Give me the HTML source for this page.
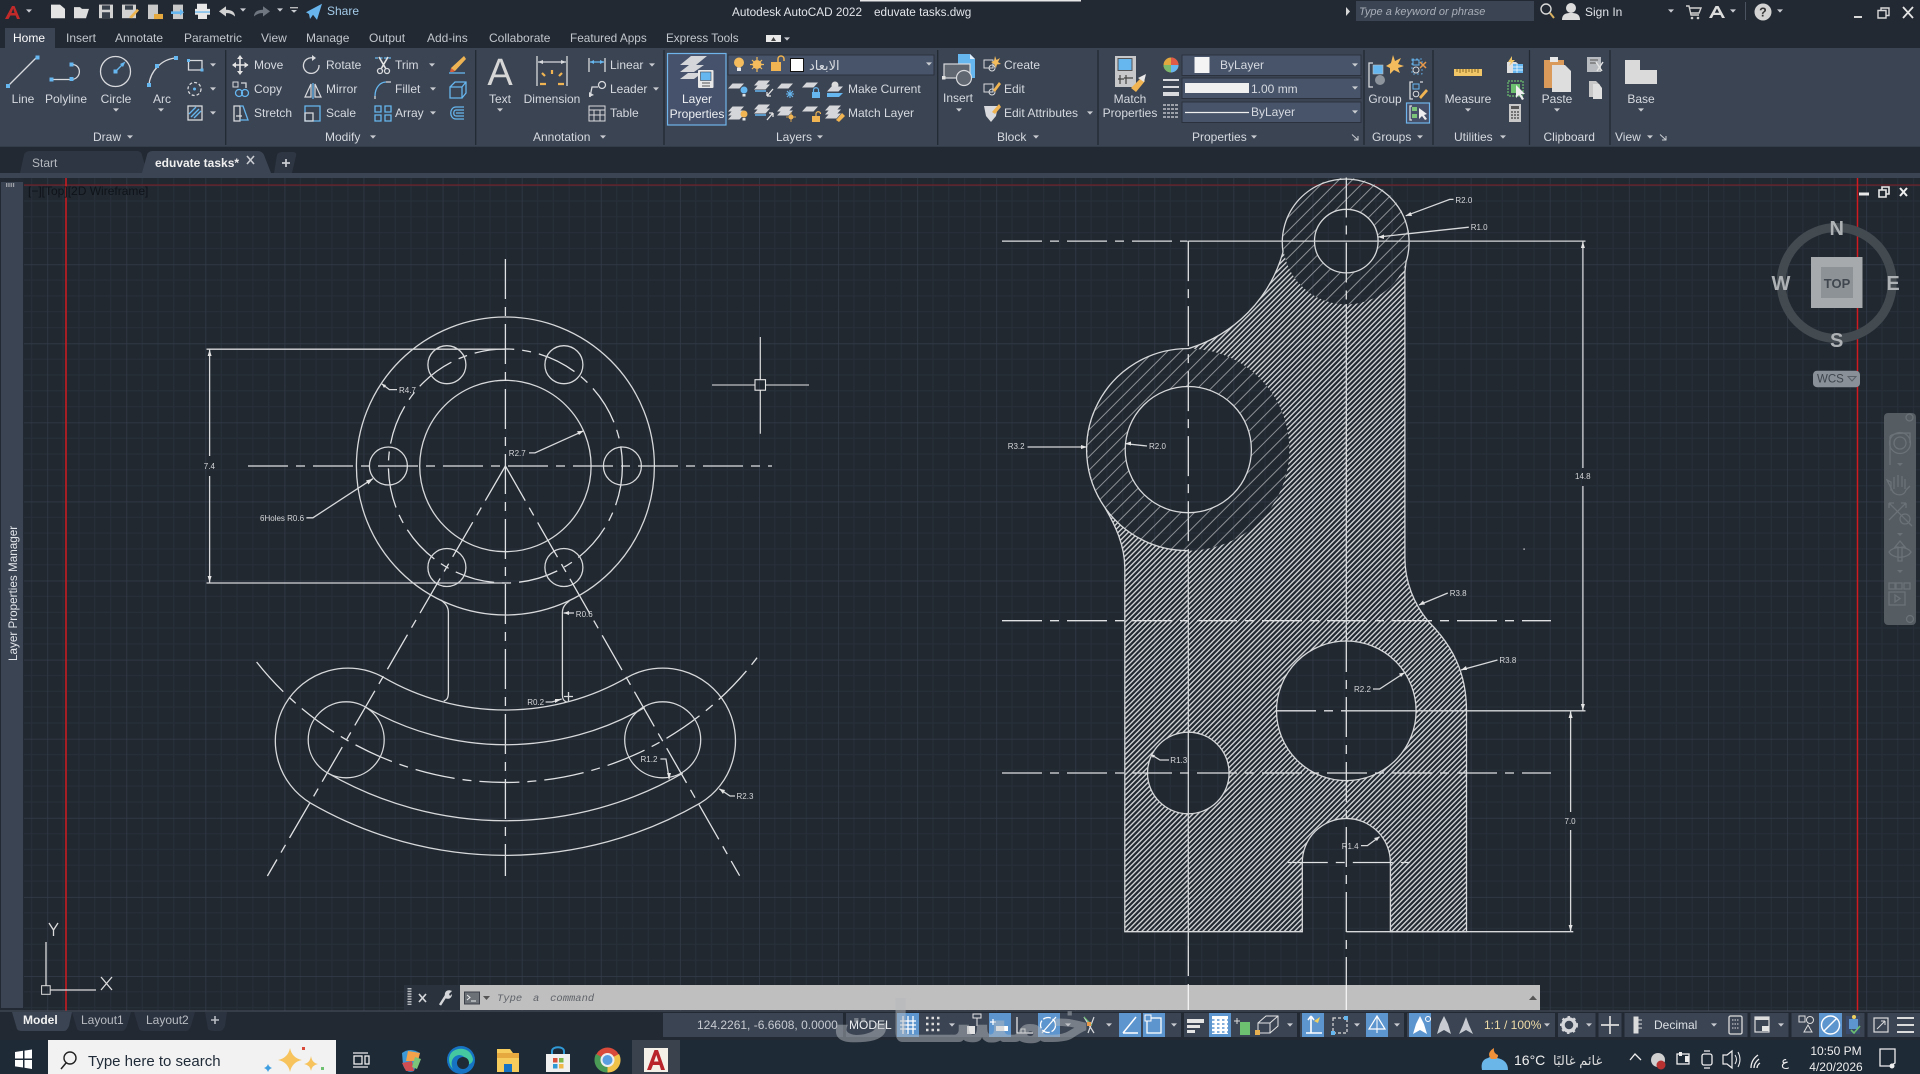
<!DOCTYPE html>
<html lang="en"><head><meta charset="utf-8"><title>Autodesk AutoCAD 2022 - eduvate tasks.dwg</title>
<style>
html,body{margin:0;padding:0;background:#222933;width:1920px;height:1074px;overflow:hidden}
svg{display:block}
text{font-family:"Liberation Sans","DejaVu Sans",sans-serif;font-size:12px;fill:#e2e5ea}
.t{fill:#c3c7cd}
.d text,text.d{font-size:8px;fill:#d4d6d8}
.p{font-size:12px;fill:#d6dae0}
.l{fill:none;stroke:#d6d8da;stroke-width:1.3}
.cl{fill:none;stroke:#dfe1e3;stroke-width:1.3;stroke-dasharray:40 8 9 8}
.g{fill:none;stroke:#d8dadd;stroke-width:1.3}
.b{fill:none;stroke:#66b6ef;stroke-width:1.3}
</style></head><body>
<svg width="1920" height="1074" viewBox="0 0 1920 1074" xmlns="http://www.w3.org/2000/svg">
<defs>
<pattern id="grid" patternUnits="userSpaceOnUse" x="47.3" y="264.3" width="79.08" height="79.08">
<path d="M15.8 0V79.08M31.6 0V79.08M47.4 0V79.08M63.3 0V79.08M0 15.8H79.08M0 31.6H79.08M0 47.4H79.08M0 63.3H79.08" stroke="#282f3a" stroke-width="1"/>
<path d="M0 0V79.08M0 0H79.08" stroke="#343c4b" stroke-width="1.4" fill="none"/>
</pattern>
<pattern id="dense" patternUnits="userSpaceOnUse" width="3.6" height="3.6" patternTransform="rotate(45)"><rect width="1.4" height="3.6" fill="#cfd1d3"/></pattern>
<pattern id="sparse" patternUnits="userSpaceOnUse" width="9.5" height="9.5" patternTransform="rotate(45)"><rect width="1" height="9.5" fill="#8d9196"/></pattern>
<mask id="mDense" maskUnits="userSpaceOnUse" x="1000" y="170" width="600" height="800">
<path fill="#fff" d="M1124.8 931.7V568C1124.8 545 1115 525 1105.2 508A101 101 0 0 1 1188.3 348.6A140 140 0 0 0 1283 252A63.4 63.4 0 1 1 1406 262L1404.9 272V558C1404.9 582 1414 604 1428 621C1452 645 1466.5 672 1466.5 710.8V931.7H1390.4V862.5A44 44 0 0 0 1302.3 862.5V931.7Z"/>
<circle cx="1346.3" cy="241.1" r="63.4" fill="#000"/><circle cx="1188.3" cy="449.6" r="101" fill="#000"/>
<circle cx="1346.3" cy="710.8" r="69.8" fill="#000"/><circle cx="1188.3" cy="773" r="40.8" fill="#000"/>
</mask>
<clipPath id="ringT"><path clip-rule="evenodd" d="M1282.9 241.1a63.4 63.4 0 1 0 126.8 0a63.4 63.4 0 1 0 -126.8 0ZM1314.5 241.1a31.8 31.8 0 1 0 63.6 0a31.8 31.8 0 1 0 -63.6 0Z"/></clipPath>
<clipPath id="ringL"><path clip-rule="evenodd" d="M1087.3 449.6a101 101 0 1 0 202 0a101 101 0 1 0 -202 0ZM1125.2 449.6a63.1 63.1 0 1 0 126.2 0a63.1 63.1 0 1 0 -126.2 0Z"/></clipPath>
<path id="c" d="M-3-1.6H3L0 1.6Z" fill="#c9ccd1"/>
<path id="lay" d="M-8 2.5L-3.5-2.5H8L3.5 2.5Z" fill="#d4d6d9"/>
</defs>

<!-- chrome -->
<rect width="1920" height="1074" fill="#222933"/>
<rect x="860" y="0" width="221" height="1.5" fill="#e8e8e8"/>
<path d="M5 28H55V48H5Z" fill="#3b4453"/>
<rect y="48" width="1920" height="98.7" fill="#3b4453"/>
<path d="M225.7 50V145M475.7 50V145M664 50V145M937.7 50V145M1098 50V145M1364 50V145M1433 50V145M1529.5 50V145M1610 50V145" stroke="#222933" stroke-width="1.3"/>

<!-- quick access bar -->
<path d="M5 19L12 6H14.500L20 19H17L15.600 15.500H10.400L8.500 19ZM11.500 13H14.500L13.200 8.500Z" fill="#c22a2a"/>
<use href="#c" x="29" y="11"/>
<g transform="translate(0,1.2) scale(1,.85)">
<path d="M51 4H60L65 9V20H51Z" fill="#e4e4e4"/>
<path d="M74 20V7H80L82 9H89L86 20Z" fill="#dedede"/>
<path d="M99 4H113V20H99Z" fill="#d2d2d2"/><rect x="102" y="5" width="8" height="5" fill="#39414d"/><rect x="102" y="13" width="8" height="7" fill="#39414d"/>
<path d="M122 4H136V20H122Z" fill="#d2d2d2"/><rect x="125" y="5" width="8" height="5" fill="#39414d"/><path d="M129 19L137 9L139 11L132 20Z" fill="#edb452"/>
<rect x="148" y="4" width="10" height="17" fill="#c9c9c9"/><path d="M154 15H163V21H154Z" fill="#e6a93f"/>
<rect x="173" y="4" width="10" height="17" fill="#c9c9c9"/><path d="M171 12H180V9L184 13L180 17V15H171Z" fill="#66b6ef"/>
<path d="M197 3H207V9H197Z M195 9H210V16H195Z M198 14H207V21H198Z" fill="#e8e8e8"/><rect x="195" y="12" width="15" height="1.5" fill="#66b6ef"/>
<path d="M219 12L226 6V10C232 10 235 13 235 18C232 15 230 14 226 14V18Z" fill="#d2d2d2"/>
<path d="M270 12L263 6V10C257 10 254 13 254 18C257 15 259 14 263 14V18Z" fill="#6f7680"/>
<path d="M290 7H298V8.4H290Z" fill="#d2d2d2"/><use href="#c" x="294" y="12"/>
<path d="M306 13L322 3L317 22L313 16L310 21L309 15Z" fill="#68b5ee"/>
</g>
<use href="#c" x="243" y="10"/><use href="#c" x="280" y="10"/>
<text x="327" y="15" style="fill:#a4cbe9">Share</text>

<!-- title -->
<text x="732" y="16" style="font-size:11.75px">Autodesk AutoCAD 2022</text>
<text x="874" y="16" style="font-size:11.75px">eduvate tasks.dwg</text>

<!-- right of title -->
<path d="M1346 7L1350 11.5L1346 16Z" fill="#d8d8d8"/>
<rect x="1356" y="1" width="178" height="20" fill="#3b4453"/>
<text x="1359" y="15" style="font-size:11px;font-style:italic;fill:#a9afb9">Type a keyword or phrase</text>
<circle cx="1546" cy="9" r="5" fill="none" stroke="#d8d8d8" stroke-width="1.4"/><path d="M1550 13L1554 18" stroke="#d8b060" stroke-width="2"/>
<circle cx="1571" cy="8" r="5" fill="#dcdcdc"/><path d="M1562 20C1562 14 1566 13 1571 13S1580 14 1580 20Z" fill="#dcdcdc"/>
<text x="1585" y="16">Sign In</text>
<use href="#c" x="1671" y="11"/>
<path d="M1686 6H1689L1691 15H1699M1690 8H1701L1699 13H1691" fill="none" stroke="#cfcfcf" stroke-width="1.400"/><circle cx="1692" cy="18" r="1.300" fill="#cfcfcf"/><circle cx="1698" cy="18" r="1.300" fill="#cfcfcf"/>
<path d="M1709 18L1715.500 6H1718.500L1725 18H1722L1720.500 15H1713.500L1712 18ZM1714.800 12.800H1719.200L1717 8.500Z" fill="#dcdcdc"/>
<use href="#c" x="1733" y="11"/>
<rect x="1745" y="2" width="1" height="18" fill="#4b5361"/>
<circle cx="1763" cy="12" r="8.500" fill="#d2d2d2"/><text x="1763" y="16.500" text-anchor="middle" style="font-size:12.500px;font-weight:bold;fill:#333">?</text>
<use href="#c" x="1780" y="11"/>
<rect x="1854" y="16" width="8" height="2" fill="#d8d8d8"/>
<path d="M1878 10.500H1886V18H1878ZM1881 10.500V8H1889V15.500H1886" fill="none" stroke="#d8d8d8" stroke-width="1.400"/>
<path d="M1903 7L1913 18M1913 7L1903 18" stroke="#e4e4e4" stroke-width="1.800"/>

<!-- tabs -->
<text x="13" y="42" style="fill:#fff">Home</text><text x="66" y="42" class="t">Insert</text><text x="115" y="42" class="t">Annotate</text><text x="184" y="42" class="t">Parametric</text><text x="261" y="42" class="t">View</text><text x="306" y="42" class="t">Manage</text><text x="369" y="42" class="t">Output</text><text x="427" y="42" class="t">Add-ins</text><text x="489" y="42" class="t">Collaborate</text><text x="570" y="42" class="t" style="font-size:11.800px">Featured Apps</text><text x="666" y="42" class="t" style="font-size:11.700px">Express Tools</text>
<rect x="766" y="35" width="15" height="7" fill="#e8e8e8"/><path d="M771 41L773.500 37L776 41Z" fill="#444"/><use href="#c" x="787" y="39"/>

<!-- DRAW -->
<path d="M8 86L37 57" class="g"/><rect x="6" y="84" width="4" height="4" fill="#66b6ef"/><rect x="35.500" y="55.500" width="4" height="4" fill="#66b6ef"/>
<path d="M52 79.500H71.500C82 79 82 64 71.500 64.500" class="g"/><rect x="49.500" y="77.500" width="4" height="4" fill="#66b6ef"/><rect x="69.500" y="77" width="4" height="4" fill="#66b6ef"/><rect x="69.500" y="62.500" width="4" height="4" fill="#66b6ef"/>
<circle cx="115.500" cy="71.500" r="15" class="g"/><path d="M115.500 71.500L124 63" class="b"/><path d="M125.500 61.500L123 67L120 64Z" fill="#66b6ef"/><rect x="113.500" y="69.500" width="4" height="4" fill="#66b6ef"/>
<path d="M149 85C150 72 161 59 176 58" class="g"/><rect x="147" y="83" width="4" height="4" fill="#66b6ef"/><rect x="155" y="64" width="4" height="4" fill="#66b6ef"/><rect x="174" y="56" width="4" height="4" fill="#66b6ef"/>
<text x="23" y="103" text-anchor="middle" class="p">Line</text><text x="66" y="103" text-anchor="middle" class="p">Polyline</text><text x="116" y="103" text-anchor="middle" class="p">Circle</text><text x="162" y="103" text-anchor="middle" class="p">Arc</text>
<use href="#c" x="116" y="110"/><use href="#c" x="161" y="110"/>
<path d="M188.500 60.500H202V70H188.500Z" class="g"/><rect x="187" y="59" width="3" height="3" fill="#66b6ef"/><rect x="200.500" y="68.500" width="3" height="3" fill="#66b6ef"/>
<circle cx="194.500" cy="89" r="6.500" class="g" stroke-dasharray="3 2"/><circle cx="194.500" cy="89" r="1.500" fill="#66b6ef"/>
<rect x="188" y="106" width="14" height="14" fill="none" stroke="#d8dadd" stroke-width="1.300"/><path d="M191 117L199 109M194 118L201 111M189 114L196 107" stroke="#66b6ef" stroke-width="1.400"/>
<use href="#c" x="213" y="65"/><use href="#c" x="213" y="89"/><use href="#c" x="213" y="113"/>
<text x="93" y="141" class="p">Draw</text><use href="#c" x="130" y="137"/>

<!-- MODIFY -->
<path d="M240 57V73M233 65H248" stroke="#e4e4e4" stroke-width="1.600"/><path d="M240 55L243 59H237ZM240 75L243 71H237ZM232 65L236 62V68ZM248.500 65L244.500 62V68Z" fill="#e4e4e4"/>
<rect x="233" y="82" width="5" height="5" fill="none" stroke="#d8dadd"/><path d="M241 83H246V88" class="g"/><circle cx="239" cy="93" r="3.500" class="b"/><circle cx="245" cy="93" r="3.500" class="b"/>
<path d="M234 106H240V121H234Z" class="g"/><path d="M240 106H243L248 120H240" class="b"/><path d="M236 116H242" class="g"/>
<text x="254" y="69" class="p">Move</text><text x="254" y="93" class="p">Copy</text><text x="254" y="117" class="p">Stretch</text>
<path d="M313 58A7.800 7.800 0 1 0 319 65" class="g" stroke-width="1.600"/><path d="M312 55L316 58L312 61Z" fill="#d8dadd"/>
<path d="M311 97H305L311 84ZM315 97V84L321 97Z" fill="none" stroke="#d8dadd" stroke-width="1.200"/><path d="M313 83V99" class="b"/>
<path d="M305 106H320V121H305Z" class="b"/><path d="M305 113H313V121H305Z" class="g"/>
<text x="326" y="69" class="p">Rotate</text><text x="326" y="93" class="p">Mirror</text><text x="326" y="117" class="p">Scale</text>
<path d="M375 58H391" stroke="#66b6ef" stroke-width="1.300" stroke-dasharray="3 1.500"/><path d="M379 57L386 69M388 57L381 69" stroke="#e4e4e4" stroke-width="1.600"/><circle cx="380" cy="71" r="2.500" class="g"/><circle cx="387" cy="71" r="2.500" class="g"/>
<path d="M375 96C375 88 380 82 386 82" class="b"/><path d="M386 82H391M375 96V99" class="g"/>
<path d="M375 106H381V112H375ZM385 106H391V112H385ZM375 115H381V121H375ZM385 115H391V121H385Z" class="b"/>
<text x="395" y="69" class="p">Trim</text><text x="395" y="93" class="p">Fillet</text><text x="395" y="117" class="p">Array</text>
<use href="#c" x="432" y="65"/><use href="#c" x="433" y="89"/><use href="#c" x="433" y="113"/>
<path d="M451 68L464 56L466 59L455 71H451Z" fill="#eeb454"/><path d="M451 68L455 71L453 72H450Z" fill="#d85e3a"/><path d="M449 73H465" class="b"/>
<path d="M450 87H462V98H450ZM450 87L455 82H466V93L462 98M462 87L466 82" class="b"/>
<path d="M464 107H456C449 107 449 119 456 119H464M464 110H456C453 110 453 116 456 116H464M456 113H464" class="b"/>
<text x="325" y="141" class="p">Modify</text><use href="#c" x="373" y="137"/>

<!-- ANNOTATION -->
<text x="500" y="85" text-anchor="middle" style="font-size:38px;fill:#d6d6d6">A</text>
<text x="500" y="103" text-anchor="middle" class="p">Text</text><use href="#c" x="500" y="110"/>
<path d="M537 56V86M567 56V86" class="g"/><path d="M538 62H566" class="g"/><path d="M538 62L543 60V64ZM566 62L561 60V64Z" fill="#d8dadd"/>
<path d="M552 74V70M545 76L542 73M559 76L562 73M540 84H546M558 84H564" stroke="#f0b452" stroke-width="2.200"/>
<text x="552" y="103" text-anchor="middle" class="p">Dimension</text>
<path d="M589 58V72M605 58V72" class="g"/><path d="M590 62H604" class="b"/><path d="M590 62L594 60V64ZM604 62L600 60V64Z" fill="#66b6ef"/>
<circle cx="602" cy="85" r="3.500" class="g"/><path d="M598 87L592 87L590 97" class="g"/><path d="M589 97L594 95L589 92Z" fill="#d8dadd"/>
<path d="M589 106H605V121H589ZM589 110H605M589 115H605M594 110V121M600 110V121" fill="none" stroke="#d8dadd" stroke-width="1"/>
<text x="610" y="69" class="p">Linear</text><text x="610" y="93" class="p">Leader</text><text x="610" y="117" class="p">Table</text>
<use href="#c" x="652" y="65"/><use href="#c" x="656" y="89"/>
<text x="533" y="141" class="p">Annotation</text><use href="#c" x="603" y="137"/>

<!-- LAYERS -->
<rect x="667.500" y="53.500" width="58.500" height="71.500" fill="#46526b" stroke="#6fb4ea" stroke-width="1.200"/>
<path d="M680 65L691 56H707L696 65Z" fill="#d4d6d9"/><path d="M680 72L689 65H704L694 72Z" fill="#d4d6d9"/><path d="M680 79L688 73H702L694 79Z" fill="#d4d6d9"/>
<rect x="698" y="70" width="15.500" height="18" rx="1" fill="#e8e8e8"/><rect x="700.500" y="72" width="10.500" height="8.500" fill="#66b6ef" stroke="#3c4450" stroke-width=".6"/><path d="M702 83H710M702 86H710" stroke="#555" stroke-width="1"/>
<text x="697" y="103" text-anchor="middle" class="p" style="fill:#eef0f3">Layer</text><text x="697" y="118" text-anchor="middle" class="p" style="fill:#eef0f3">Properties</text>
<rect x="728" y="55" width="206" height="20" fill="#47546a" stroke="#2b323d"/>
<circle cx="739" cy="62.500" r="5" fill="#f4bc5c"/><rect x="737" y="67.500" width="4" height="3.500" fill="#e8e8e8"/>
<circle cx="757" cy="64.500" r="4.500" fill="#f4bc5c"/><path d="M757 57V60M757 69V72M750 64.500H753M761 64.500H764M752 60L754 62M762 60L760 62M752 69L754 67M762 69L760 67" stroke="#f4bc5c" stroke-width="1.200"/>
<path d="M771 71V62H781V71Z" fill="#f0b452"/><path d="M778 62V59C778 55 784 55 784 59V61" fill="none" stroke="#f0b452" stroke-width="1.500"/>
<rect x="790.500" y="58.500" width="13" height="13" fill="#fff" stroke="#111" stroke-width="1"/>
<text x="809" y="70" direction="ltr" style="font-size:13px;fill:#d8dbe0">الابعاد</text>
<use href="#c" x="929" y="64"/>
<!-- layer small icons row 1 -->
<use href="#lay" x="736" y="86"/><circle cx="744" cy="90" r="3.500" fill="#66b6ef"/><rect x="742.500" y="94" width="3" height="2.500" fill="#e4e4e4"/>
<use href="#lay" x="762" y="83"/><use href="#lay" x="762" y="87"/><path d="M755 91H766" stroke="#66b6ef" stroke-width="1.500"/><path d="M773 89L767 96M767 96H771M767 96V92" stroke="#e4e4e4" stroke-width="1.300" fill="none"/>
<use href="#lay" x="785" y="86"/><path d="M790 90V98M786 94H794M787 91L793 97M793 91L787 97" stroke="#66b6ef" stroke-width="1.100"/>
<use href="#lay" x="810" y="85"/><rect x="812" y="92" width="8" height="6" fill="#66b6ef"/><path d="M813.500 92V90C813.500 87 818.500 87 818.500 90V92" fill="none" stroke="#66b6ef" stroke-width="1.200"/>
<circle cx="835" cy="85" r="3.500" fill="#dcdcdc"/><use href="#lay" x="835" y="89"/><path d="M827 93H843L839 97H827Z" fill="#66b6ef"/>
<text x="848" y="93" class="p">Make Current</text>
<!-- row 2 -->
<use href="#lay" x="736" y="109"/><use href="#lay" x="736" y="113"/><use href="#lay" x="736" y="117"/><circle cx="744" cy="114" r="3.500" fill="#f0b452"/><rect x="742.500" y="118" width="3" height="2.500" fill="#e4e4e4"/>
<use href="#lay" x="762" y="107"/><use href="#lay" x="762" y="111"/><path d="M755 115H766" stroke="#66b6ef" stroke-width="1.500"/><path d="M767 120L773 113M773 113H769M773 113V117" stroke="#e4e4e4" stroke-width="1.300" fill="none"/>
<use href="#lay" x="785" y="109"/><use href="#lay" x="785" y="113"/><circle cx="791" cy="117" r="2.500" fill="#f0b452"/><path d="M791 112V122M786 117H796" stroke="#f0b452" stroke-width=".8"/>
<use href="#lay" x="810" y="109"/><rect x="812" y="116" width="8" height="6" fill="#f0b452"/><path d="M816 116V114C816 111 820.500 111 820.500 114" fill="none" stroke="#f0b452" stroke-width="1.200"/>
<use href="#lay" x="833" y="108"/><use href="#lay" x="833" y="112"/><use href="#lay" x="833" y="116"/><path d="M836 120L842 113L845 116L839 122Z" fill="#f0b452"/>
<text x="848" y="117" class="p">Match Layer</text>
<text x="776" y="141" class="p">Layers</text><use href="#c" x="820" y="137"/>

<!-- BLOCK -->
<path d="M958 54H970L975 59V78H958Z" fill="#66b6ef"/><path d="M970 54L975 59H970Z" fill="#dfeefa"/>
<rect x="944" y="64" width="26" height="14" fill="#606770" stroke="#d8dadd" stroke-width="1.200"/><circle cx="964" cy="78" r="7.500" fill="#606770" stroke="#d8dadd" stroke-width="1.200"/>
<rect x="942" y="76" width="3.500" height="3.500" fill="#e0e0e0"/>
<text x="958" y="102" text-anchor="middle" class="p">Insert</text><use href="#c" x="959" y="110"/>
<rect x="984" y="60" width="9" height="8" fill="none" stroke="#d8dadd"/><circle cx="992" cy="68" r="3" fill="none" stroke="#d8dadd"/><path d="M995 56L996.500 60L1000 58L998 62L1001 64L997 64.500L996 68L994 64L991 62L994 61Z" fill="#f4bc5c"/>
<rect x="984" y="84" width="9" height="8" fill="none" stroke="#d8dadd"/><circle cx="992" cy="92" r="3" fill="none" stroke="#d8dadd"/><path d="M993 90L999 82L1001 84L995 92Z" fill="#f0b452"/>
<path d="M984 106H998L996 116L991 122L986 116Z" fill="#d8dadd"/><path d="M992 112L999 104L1001 107L995 114Z" fill="#f0b452"/>
<text x="1004" y="69" class="p">Create</text><text x="1004" y="93" class="p">Edit</text><text x="1004" y="117" class="p">Edit Attributes</text>
<use href="#c" x="1090" y="113"/>
<text x="997" y="141" class="p">Block</text><use href="#c" x="1036" y="137"/>

<!-- PROPERTIES -->
<rect x="1115" y="56" width="21" height="31" fill="#c6c8ca"/><rect x="1118" y="58.500" width="14" height="12" fill="#66b6ef" stroke="#555"/><path d="M1120 75V84M1126 75V84M1118 79H1124M1124 78H1133" stroke="#444" stroke-width="1.200"/>
<path d="M1131 88L1141 78L1145 81L1136 92Z" fill="#f0b452"/><path d="M1138 78L1146 74L1144 82Z" fill="#e8e8e8"/>
<text x="1130" y="103" text-anchor="middle" class="p">Match</text><text x="1130" y="117" text-anchor="middle" class="p">Properties</text>
<circle cx="1171" cy="65" r="7.500" fill="#e2a840"/><path d="M1171 65V57.500A7.500 7.500 0 0 1 1178.500 65Z" fill="#e05a48"/><path d="M1171 65H1178.500A7.500 7.500 0 0 1 1171 72.500Z" fill="#66b6ef"/><path d="M1171 65V72.500A7.500 7.500 0 0 1 1163.500 65Z" fill="#7ab86c"/>
<path d="M1163 80H1179M1163 87H1179" stroke="#d8dadd" stroke-width="2"/><rect x="1163" y="92" width="16" height="4" fill="#d8dadd"/>
<path d="M1163 105H1179M1163 109H1179M1163 113H1179M1163 117H1179" stroke="#d8dadd" stroke-width="1.300" stroke-dasharray="3 1"/>
<rect x="1182" y="55" width="179" height="20.500" fill="#47546a" stroke="#2b323d"/><rect x="1182" y="78" width="179" height="20.500" fill="#47546a" stroke="#2b323d"/><rect x="1182" y="102" width="179" height="20.500" fill="#47546a" stroke="#2b323d"/>
<rect x="1194.500" y="57" width="15" height="16" fill="#f4f4f4"/>
<text x="1220" y="69" class="p">ByLayer</text>
<rect x="1185" y="83" width="64" height="10" fill="#f0f0f0"/><text x="1251" y="93" class="p">1.00 mm</text>
<path d="M1185 112.500H1249" stroke="#f0f0f0" stroke-width="1.300"/><text x="1251" y="116" class="p">ByLayer</text>
<use href="#c" x="1355" y="65"/><use href="#c" x="1355" y="88"/><use href="#c" x="1355" y="112"/>
<text x="1192" y="141" class="p">Properties</text><use href="#c" x="1254" y="137"/>
<path d="M1352 134.500L1358 140M1358 136V140H1354" stroke="#c9ccd1" fill="none"/>

<!-- GROUPS -->
<path d="M1373 63H1369V87H1373M1391 63H1395" class="g"/><rect x="1373" y="65" width="10" height="9" fill="#66b6ef" stroke="#bbb" stroke-width=".6"/><circle cx="1380" cy="80" r="5" fill="#8e949c"/>
<path d="M1393 55L1395 61L1401 58L1398 64L1404 66L1398 68L1400 73L1394 70L1390 74L1390 68L1386 66L1391 63Z" fill="#f4bc5c"/>
<text x="1385" y="103" text-anchor="middle" class="p">Group</text>
<path d="M1412 59H1422V74H1412Z" fill="none" stroke="#66b6ef" stroke-width=".8" stroke-dasharray="2 2"/><rect x="1413" y="60" width="6" height="5" fill="none" stroke="#66b6ef"/><circle cx="1416" cy="70" r="3" fill="none" stroke="#d8dadd"/><path d="M1420 62L1426 68M1426 62L1420 68" stroke="#e89a4a" stroke-width="1.500"/>
<path d="M1413 82H1410V99H1413M1420 82H1423" class="g"/><rect x="1413" y="84" width="6" height="5" fill="none" stroke="#66b6ef"/><circle cx="1416" cy="94" r="2.800" fill="none" stroke="#d8dadd"/><path d="M1419 97L1426 89L1428 91L1421 99Z" fill="#f0b452"/>
<rect x="1406.500" y="103" width="23" height="20" fill="#465169" stroke="#6fb4ea" stroke-width="1.200"/><path d="M1412 106H1410V120H1412" class="g"/><rect x="1412" y="107" width="5" height="4" fill="#7cc47a"/><rect x="1412" y="114" width="5" height="4" fill="#7cc47a"/><path d="M1419 108V119L1422 116L1425 120L1427 119L1424 115L1427 114Z" fill="#eee"/>
<text x="1372" y="141" class="p">Groups</text><use href="#c" x="1420" y="137"/>

<!-- UTILITIES -->
<rect x="1454" y="69" width="28" height="7" fill="#f0c667"/><path d="M1457 69V72M1460 69V73M1463 69V72M1466 69V73M1469 69V72M1472 69V73M1475 69V72M1478 69V73" stroke="#8c6a20" stroke-width="1"/>
<text x="1468" y="103" text-anchor="middle" class="p">Measure</text><use href="#c" x="1468" y="110"/>
<path d="M1507 62H1516L1523 68V73H1507Z" fill="#e0e0e0"/><rect x="1513" y="64" width="10" height="9" fill="#66b6ef"/><path d="M1513 67H1523M1513 70H1523M1517 64V73" stroke="#fff" stroke-width=".7"/><path d="M1512 56L1508 62H1511L1509 66L1515 60H1512Z" fill="#f0c667"/>
<rect x="1508" y="81" width="15" height="15" fill="none" stroke="#6cc070" stroke-dasharray="2 1" stroke-width="1.200"/><rect x="1511" y="84" width="9" height="9" fill="#6cc070"/><path d="M1516 85V98L1519 95L1522 100L1524 99L1521 94L1525 94Z" fill="#eee"/>
<rect x="1509" y="104" width="12" height="18" fill="#c8c8c8"/><rect x="1511" y="106" width="8" height="3" fill="#555"/><path d="M1511 112H1519M1511 115H1519M1511 118H1519" stroke="#555" stroke-width="1.500" stroke-dasharray="2 1"/>
<text x="1454" y="141" class="p">Utilities</text><use href="#c" x="1503" y="137"/>

<!-- CLIPBOARD -->
<rect x="1544" y="60" width="20" height="28" fill="#d99a5a"/><rect x="1550" y="57" width="8" height="5" fill="#e8e8e8"/><path d="M1552 65H1565L1571 71V92H1552Z" fill="#dedede"/>
<text x="1557" y="103" text-anchor="middle" class="p">Paste</text><use href="#c" x="1557" y="110"/>
<rect x="1587" y="57" width="14" height="15" fill="#b8bcc0"/><path d="M1590 60H1598M1590 63H1596" stroke="#555"/><path d="M1596 62L1602 71M1603 62L1597 71" stroke="#e4e4e4" stroke-width="1.400"/>
<path d="M1589 81H1596L1600 85V97H1589Z" fill="#c8c8c8"/><path d="M1593 84H1599L1602 88V99H1593Z" fill="#e0e0e0"/>
<text x="1543.500" y="141" class="p">Clipboard</text>

<!-- VIEW -->
<path d="M1625 60H1640V70H1657V84H1625Z" fill="#dadada"/>
<text x="1641" y="103" text-anchor="middle" class="p">Base</text><use href="#c" x="1641" y="110"/>
<text x="1615" y="141" class="p">View</text><use href="#c" x="1650" y="137"/>
<path d="M1660 134.500L1666 140M1666 136V140H1662" stroke="#c9ccd1" fill="none"/>

<!-- file tabs -->
<path d="M20 173L24 155Q25 151 30 151H137Q141 151 142 155L147 173Z" fill="#2e3643"/>
<path d="M142 173L147 155Q148 151 153 151H258Q262 151 264 155L271 173Z" fill="#3b4453"/>
<path d="M274 173L277 155Q278 152 282 152H293Q297 152 296 156L292 173Z" fill="#2e3643"/>
<text x="32" y="167" style="fill:#b6bac0">Start</text>
<text x="155" y="167" style="font-weight:bold;fill:#f0f0f0">eduvate tasks*</text>
<path d="M247 156L254 164M254 156L247 164" stroke="#c9ccd1" stroke-width="1.600"/>
<path d="M286 159V167M282 163H290" stroke="#c9ccd1" stroke-width="1.700"/>
<rect y="173" width="1920" height="5" fill="#3b4453"/>

<!-- viewport -->
<rect x="0" y="178" width="1920" height="833" fill="#212830"/>
<rect x="24" y="178" width="1896" height="833" fill="url(#grid)"/>
<path d="M24 185H1920" stroke="#6e2027" stroke-width="1.300"/>
<path d="M66 178V1011" stroke="#d01a1f" stroke-width="1.500"/>
<path d="M1857.500 178V1011" stroke="#d01a1f" stroke-width="1.500"/>
<rect x="0" y="178" width="24" height="833" fill="#222933"/>
<rect x="1" y="182" width="22" height="826" fill="#3b4453"/>
<path d="M6 184H15M6 186H15" stroke="#d8d8d8" stroke-width="1.200" stroke-dasharray="1.300 1"/>
<text transform="translate(17,661) rotate(-90)" style="font-size:11.700px;fill:#e2e5ea">Layer Properties Manager</text>
<text x="28" y="195" style="font-size:12px;fill:#0f1319">[−][Top][2D Wireframe]</text>

<!-- LEFT DRAWING -->
<g fill="none">
<circle cx="505.400" cy="466" r="149" class="l"/>
<circle cx="505.400" cy="466" r="85.700" class="l"/>
<circle cx="505.400" cy="466" r="117" class="cl" stroke-dasharray="34 6 8 6"/>
<circle cx="388.400" cy="466" r="19" class="l"/><circle cx="622.400" cy="466" r="19" class="l"/>
<circle cx="446.900" cy="364.700" r="19" class="l"/><circle cx="563.900" cy="364.700" r="19" class="l"/>
<circle cx="446.900" cy="567.500" r="19" class="l"/><circle cx="563.900" cy="567.500" r="19" class="l"/>
<path d="M248 466H772" class="cl"/>
<path d="M505.400 259V876" class="cl"/>
<path d="M505.400 466L267.400 876" class="cl"/>
<path d="M505.400 466L739.600 875.700" class="cl"/>
<path d="M256.600 662A316.700 316.700 0 0 0 757.600 657" class="cl" stroke-dasharray="34 7 8 7"/>
<path d="M383.400 677.300A244 244 0 0 0 627.400 677.300A72.700 72.700 0 0 1 700.100 803.200A389.400 389.400 0 0 1 310.700 803.200A72.700 72.700 0 0 1 383.400 677.300Z" class="l"/>
<path d="M366.050 707.400A278.700 278.700 0 0 0 644.750 707.400M682.750 773.200A354.700 354.700 0 0 1 328.050 773.200" class="l"/>
<circle cx="346.200" cy="739.800" r="38" class="l"/><circle cx="662.700" cy="739.800" r="38" class="l"/>
<path d="M441 600C446 604 448.400 607 448.400 613V692C448.400 698 447 700 443.800 701" class="l" stroke-width="1.600"/>
<path d="M569.300 601C564 605 562.400 608 562.400 613V695C562.400 699 563.500 701 566.600 702" class="l" stroke-width="1.600"/>
<path d="M206.500 349.200H505.400M206.500 583H505.400" class="l"/>
<path d="M209.600 349.200V456M209.600 476V583" class="l"/>
<path d="M381.800 383.900L389.400 389.600H397M529 452.900H535L583.800 430.800M306.400 517.800H312.900L373 478.600M563.600 613H574M545.600 702H552L561.700 699M660.400 759H666L669.200 779.400M719.300 788.800L730 796H735" class="l" stroke-width="1"/>
<path d="M564 696.500H573M568.500 692V701" class="l" stroke-width="1"/>
</g>
<path d="M209.600 349.500L207.600 356H211.600ZM209.600 582.500L207.600 576H211.600Z" fill="#e4e4e4"/>
<path d="M381.800 383.900L386 385L384 388ZM583.800 430.800L577 431.200L579 435ZM373 478.600L366 480.500L368.500 484.500ZM563.600 613L569 611V615ZM561.700 699L555 699V703ZM669.200 779.400L667 773H671ZM719.300 788.800L725 790L723 794Z" fill="#e4e4e4"/>
<g class="d">
<text x="399" y="393">R4.7</text><text x="508.800" y="456">R2.7</text><text x="203.800" y="469">7.4</text><text x="260" y="521">6Holes R0.6</text><text x="575.800" y="617">R0.6</text><text x="527.200" y="705">R0.2</text><text x="640.500" y="762">R1.2</text><text x="736.500" y="799">R2.3</text>
</g>

<!-- crosshair -->
<path d="M712 385H755M765.500 385H809M760.300 337V379.500M760.300 390V433.700" stroke="#e6e6e6" stroke-width="1.100" fill="none"/>
<rect x="755" y="379.700" width="10.500" height="10.500" fill="none" stroke="#e6e6e6" stroke-width="1.100"/>

<!-- RIGHT DRAWING -->
<rect x="1000" y="170" width="600" height="800" fill="url(#dense)" mask="url(#mDense)"/>
<rect x="1280" y="170" width="135" height="140" fill="url(#sparse)" clip-path="url(#ringT)"/>
<rect x="1085" y="345" width="210" height="210" fill="url(#sparse)" clip-path="url(#ringL)"/>
<g fill="none">
<path d="M1124.800 931.700V568C1124.800 545 1115 525 1105.200 508A101 101 0 0 1 1188.300 348.600A140 140 0 0 0 1283 252A63.400 63.400 0 1 1 1406 262L1404.900 272V558C1404.900 582 1414 604 1428 621C1452 645 1466.500 672 1466.500 710.800V931.700H1390.400V862.500A44 44 0 0 0 1302.300 862.500V931.700Z" class="l" stroke-width="1.700"/>
<path d="M1105.200 508A101 101 0 0 0 1188.300 550.600" class="l"/>
<circle cx="1346.300" cy="241.100" r="31.800" class="l" stroke-width="1.500"/>
<circle cx="1188.300" cy="449.600" r="63.100" class="l" stroke-width="1.500"/>
<circle cx="1346.300" cy="710.800" r="69.800" class="l" stroke-width="1.500"/>
<circle cx="1188.300" cy="773" r="40.800" class="l" stroke-width="1.500"/>
<path d="M1002 241.100H1187.500" class="cl"/>
<path d="M1188.300 241.100H1585.500" class="l" stroke="#e4e4e4"/>
<path d="M1188.300 241.100V550" class="cl"/>
<path d="M1188.300 550V946" class="l" stroke="#e8e8e8"/>
<path d="M1188.300 946V1010" class="cl" stroke-dashoffset="10"/>
<path d="M1346.300 177.500V304" class="cl"/>
<path d="M1346.300 304V632" class="l" stroke="#e8e8e8"/>
<path d="M1346.300 632V1010" class="cl"/>
<path d="M1002 620.700H1551" class="cl"/>
<path d="M1002 773H1551" class="cl"/>
<path d="M1276 710.800H1346.300" class="cl" stroke-dasharray="20 6 6 6"/>
<path d="M1346.300 710.800H1585.500" class="l"/>
<path d="M1287.800 862.500H1415" class="cl" stroke-dasharray="70 8 9 8"/>
<path d="M1582.900 241.100V468M1582.900 486V710.800" class="l"/>
<path d="M1570.600 710.800V812M1570.600 830V931.700" class="l"/>
<path d="M1346.300 931.700H1573.300" class="l"/>
<path d="M1405.700 215.800L1449.700 199.400H1453.500M1378 237L1468.800 227.200M1027.500 447H1087M1125 443.600L1147 446M1419 605L1447.800 593M1461 670L1497.500 660M1373 689H1379.600L1404.900 672.500M1151 754.600L1160 760H1169M1361 845.600H1367.400L1379.600 836.700" class="l" stroke-width="1"/>
</g>
<path d="M1582.900 241.500L1580.900 248H1584.900ZM1582.900 710.500L1580.900 704H1584.900ZM1570.600 711L1568.600 718H1572.600ZM1570.600 931.500L1568.600 925H1572.600ZM1405.700 215.800L1412 216L1410.500 212ZM1378 237L1384 234.500V239ZM1087 447L1081 445V449ZM1125 443.600L1131 441.500V445.500ZM1419 605L1425 604.500L1423 600.500ZM1461 670L1467 670L1466 666ZM1404.900 672.500L1399 673.500L1401 677ZM1151 754.600L1155 755L1153 758ZM1379.600 836.700L1374 838L1377 841Z" fill="#e4e4e4"/>
<rect x="1523.500" y="548.500" width="1.200" height="1.200" fill="#fff"/>
<g class="d">
<text x="1455.400" y="203">R2.0</text><text x="1470.700" y="230">R1.0</text><text x="1007.700" y="449">R3.2</text><text x="1149" y="449">R2.0</text><text x="1575" y="479">14.8</text><text x="1564.500" y="824">7.0</text><text x="1449.700" y="596">R3.8</text><text x="1499.400" y="663">R3.8</text><text x="1354" y="692">R2.2</text><text x="1170.300" y="763">R1.3</text><text x="1341.700" y="849">R1.4</text>
</g>

<!-- viewport controls -->
<rect x="1859" y="192.500" width="10" height="3" fill="#e8e8e8"/>
<path d="M1879 190H1886V197H1879ZM1882 190V187H1889V194H1886" fill="none" stroke="#e8e8e8" stroke-width="1.600"/>
<path d="M1900 188L1907 196M1907 188L1900 196" stroke="#eee" stroke-width="2"/>

<!-- viewcube -->
<circle cx="1836.700" cy="283" r="55.500" fill="none" stroke="#434a50" stroke-width="9"/>
<rect x="1811" y="257" width="51.500" height="51" fill="#a6aaac"/>
<rect x="1821" y="267" width="32" height="31" fill="#8c9296"/>
<text x="1837" y="288" text-anchor="middle" style="font-size:13px;font-weight:bold;fill:#41474f">TOP</text>
<text x="1836.700" y="235" text-anchor="middle" style="font-size:20px;font-weight:bold;fill:#aeb2b5">N</text>
<text x="1836.700" y="347" text-anchor="middle" style="font-size:20px;font-weight:bold;fill:#aeb2b5">S</text>
<text x="1781" y="290" text-anchor="middle" style="font-size:20px;font-weight:bold;fill:#aeb2b5">W</text>
<text x="1893" y="290" text-anchor="middle" style="font-size:20px;font-weight:bold;fill:#aeb2b5">E</text>
<rect x="1813" y="370.700" width="47" height="16.500" rx="4" fill="#8a9097"/>
<text x="1817" y="382.500" style="font-size:11.500px;fill:#3f454c">WCS</text>
<path d="M1848 376.500H1856L1852 381Z" fill="none" stroke="#5a6067"/>

<!-- nav bar -->
<rect x="1884" y="413" width="32" height="212" rx="4" fill="#555c62"/>
<g fill="none" stroke="#6b7278" stroke-width="1.300">
<circle cx="1909.500" cy="417.500" r="3.500"/>
<circle cx="1900" cy="443" r="6"/><circle cx="1900" cy="443" r="10.500"/>
<path d="M1890 465V437Q1890 433 1910 433V443"/>
<path d="M1892 490L1887 480L1891 482V490ZM1894 489V477M1898 487V475M1902 487V476M1905 489V479M1906 490L1910 486M1892 490C1894 496 1904 497 1906 490"/>
<path d="M1889 503L1908 522M1906 503L1889 520M1889 503H1894M1889 503V508M1906 503H1901M1906 503V508"/><circle cx="1905" cy="519" r="5"/><path d="M1909 523L1912 526"/>
<path d="M1900 541L1895 547H1898V561H1902V547H1905ZM1889 552C1893 559 1907 559 1911 552C1907 546 1893 546 1889 552Z"/>
<rect x="1889" y="583" width="6" height="6"/><rect x="1896" y="583" width="6" height="6"/><rect x="1904" y="583" width="6" height="6"/><rect x="1889" y="592" width="16" height="13"/>
<path d="M1895 595V602L1900 598.500Z"/><circle cx="1910" cy="619" r="3.500"/>
</g>
<path d="M1897 463H1903L1900 466ZM1897 533H1903L1900 536ZM1897 570H1903L1900 573Z" fill="#6b7278"/>

<!-- UCS -->
<path d="M46 942V986M50 990H96" stroke="#dcdcdc" stroke-width="1.300" fill="none"/>
<rect x="41.600" y="985.700" width="8.600" height="8.600" fill="none" stroke="#dcdcdc"/>
<path d="M49 923L53.500 930L58 923M53.500 930V936" stroke="#dcdcdc" stroke-width="1.300" fill="none"/>
<path d="M101 977L112 990M112 977L101 990" stroke="#dcdcdc" stroke-width="1.300" fill="none"/>

<!-- command bar -->
<rect x="404" y="985" width="56" height="25" fill="#2a323d"/>
<rect x="460" y="985" width="1080" height="25" fill="#bfbfbf"/>
<path d="M1188.300 985V1010M1346.300 985V1010" stroke="#f4f4f4" stroke-width="1.300"/>
<path d="M409.500 988V1005" stroke="#b8bcc0" stroke-width="4" stroke-dasharray="1.500 1.100"/>
<path d="M419 994L426 1002M426 994L419 1002" stroke="#d4d6d9" stroke-width="1.700"/>
<path d="M440 1005L447 994" stroke="#d4d6d9" stroke-width="2.500"/><path d="M445 996C444 991 448 989 452 991L449 994L450 996L452 994C452 998 449 1000 445 998Z" fill="#d4d6d9"/>
<rect x="464.500" y="992" width="15" height="12" fill="#6c7178" stroke="#3c4048"/><path d="M467 995L470 997.500L467 1000M471 1001H476" stroke="#eee" fill="none"/>
<path d="M483 996H490L486.500 1000Z" fill="#555"/>
<text x="497" y="1001" style="font-family:'Liberation Mono',monospace;font-style:italic;font-size:10.500px;fill:#5f6369;word-spacing:4.500px">Type a command</text>
<path d="M1529 1000H1537L1533 995.500Z" fill="#555"/>

<!-- bottom -->
<rect y="1011" width="1920" height="29" fill="#222933"/>
<rect y="1010.500" width="1920" height="1" fill="#4a5260"/>
<path d="M12 1012L17 1029Q18 1031 22 1031H64Q67 1031 69 1026L72 1012Z" fill="#3b4453"/>
<path d="M72 1012L77 1029Q78 1031 82 1031H122Q125 1031 127 1026L131 1012Z" fill="#2c3340"/>
<path d="M134 1012L139 1029Q140 1031 144 1031H186Q189 1031 191 1026L195 1012Z" fill="#2c3340"/>
<path d="M205 1012L208 1029Q210 1031 213 1031H220Q223 1031 225 1026L227 1012Z" fill="#2c3340"/>
<text x="23" y="1024" style="font-weight:bold;fill:#f2f2f2">Model</text>
<text x="81" y="1024" style="fill:#b8bcc2">Layout1</text><text x="146" y="1024" style="fill:#b8bcc2">Layout2</text>
<path d="M215 1016V1024M211 1020H219" stroke="#b8bcc2" stroke-width="1.600"/>

<!-- status bar -->
<rect x="663" y="1013" width="1257" height="24" fill="#3b4453"/>
<path d="M844.500 1013V1037M1182.500 1013V1037M1298.500 1013V1037M1405.500 1013V1037M1556.500 1013V1037M1597 1013V1037M1623 1013V1037M1749 1013V1037M1790 1013V1037M1866 1013V1037" stroke="#222933" stroke-width="3"/>
<text x="697" y="1029" style="font-size:12px;fill:#c8ccd2">124.2261, -6.6608, 0.0000</text>
<text x="849" y="1029" style="font-size:12px;fill:#eef0f2">MODEL</text>
<g fill="#5d95cf"><rect x="897" y="1013" width="22" height="24"/><rect x="989" y="1013" width="22" height="24"/><rect x="1038" y="1013" width="22" height="24"/><rect x="1119" y="1013" width="22" height="24"/><rect x="1143" y="1013" width="22" height="24"/><rect x="1209" y="1013" width="22" height="24"/><rect x="1302" y="1013" width="22" height="24"/><rect x="1366" y="1013" width="22" height="24"/><rect x="1409" y="1013" width="22" height="24"/><rect x="1819" y="1013" width="23" height="24"/></g>
<path d="M900 1021H916M900 1025H916M900 1029H916M903 1016V1034M908 1016V1034M913 1016V1034" stroke="#fff" stroke-width="1.300"/>
<path d="M926 1018H942M926 1024H942M926 1030H942" stroke="#dcdcdc" stroke-width="2.500" stroke-dasharray="2.500 3"/>
<use href="#c" x="952" y="1025"/>
<rect x="967" y="1026" width="8" height="8" fill="#e4e4e4"/><path d="M973 1018H981V1014H973ZM977 1018V1026" stroke="#e4e4e4" fill="none"/>
<path d="M993 1019V1025M990 1022H996" stroke="#fff" stroke-width="1.300"/><rect x="996" y="1026" width="12" height="5" fill="#fff"/>
<path d="M1017 1017V1033H1033" stroke="#e4e4e4" stroke-width="1.300" fill="none"/><rect x="1021" y="1029" width="4" height="4" fill="none" stroke="#e4e4e4"/>
<circle cx="1048" cy="1025" r="7.500" fill="none" stroke="#fff" stroke-width="1.300" stroke-dasharray="8 2"/><path d="M1042 1033L1056 1017" stroke="#fff" stroke-width="1.300"/>
<use href="#c" x="1068" y="1025"/>
<path d="M1084 1017L1094 1033M1094 1017L1088 1033" stroke="#d8dadd" stroke-width="1.200"/><path d="M1084 1017L1092 1025" stroke="#6cc070"/><rect x="1087" y="1022" width="4" height="4" fill="#e89a4a"/>
<use href="#c" x="1109" y="1025"/>
<path d="M1123 1033L1136 1017M1123 1033H1138" stroke="#fff" stroke-width="1.500" fill="none"/>
<rect x="1147" y="1018" width="14" height="15" fill="none" stroke="#fff" stroke-width="1.300"/><rect x="1145" y="1015" width="6" height="6" fill="#5d95cf" stroke="#fff"/>
<use href="#c" x="1174" y="1025"/>
<path d="M1187 1019H1204V1023H1187ZM1187 1025H1200V1028H1187ZM1187 1030H1195V1033H1187Z" fill="#e4e4e4"/>
<rect x="1212" y="1016" width="16" height="18" fill="#fff"/><path d="M1212 1020H1228M1212 1024H1228M1212 1028H1228M1212 1032H1228" stroke="#5d95cf" stroke-width="1.600" stroke-dasharray="2.500 2.500"/>
<path d="M1237 1018V1024M1234 1021H1240" stroke="#dcdcdc"/><rect x="1240" y="1022" width="10" height="13" fill="#6cc070"/>
<rect x="1258" y="1023" width="12" height="10" fill="none" stroke="#e4e4e4"/><path d="M1258 1023L1266 1016H1278V1026L1270 1033M1270 1023L1278 1016" fill="none" stroke="#e4e4e4"/><rect x="1255" y="1030" width="5" height="5" fill="#e8b050"/>
<use href="#c" x="1290" y="1025"/>
<path d="M1311 1033V1016M1311 1016L1308 1020M1311 1016L1314 1020M1306 1033H1322" stroke="#fff" stroke-width="1.600" fill="none"/><path d="M1314 1021L1320 1017L1318 1023Z" fill="#f0d060"/>
<rect x="1333" y="1018" width="14" height="15" fill="none" stroke="#dcdcdc" stroke-width="1.200" stroke-dasharray="3 2"/><rect x="1331" y="1031" width="4" height="4" fill="#66b6ef"/><rect x="1344" y="1016" width="4" height="4" fill="#66b6ef"/>
<use href="#c" x="1357" y="1025"/>
<path d="M1377 1016L1385 1029H1369Z" fill="none" stroke="#fff" stroke-width="1.200"/><path d="M1377 1016V1033" stroke="#fff"/>
<use href="#c" x="1397" y="1025"/>
<path d="M1420 1016L1424 1024L1427 1034L1420 1030L1413 1034L1416 1024Z" fill="#fff"/><circle cx="1428" cy="1019" r="2.500" fill="none" stroke="#fff"/>
<path d="M1444 1016L1448 1024L1451 1034L1444 1030L1437 1034L1440 1024Z" fill="#c8ccd2"/><path d="M1466 1017L1469 1025L1473 1034L1466 1030L1459 1034L1463 1025Z" fill="#c8ccd2"/>
<text x="1484" y="1029" style="font-size:12px;fill:#efdca8">1:1 / 100%</text>
<use href="#c" x="1547" y="1025"/>
<circle cx="1569" cy="1025" r="6" fill="none" stroke="#d4d6d9" stroke-width="3.500"/><circle cx="1569" cy="1025" r="8" fill="none" stroke="#d4d6d9" stroke-width="2" stroke-dasharray="2.500 3.500"/>
<use href="#c" x="1589" y="1025"/>
<path d="M1610 1016V1034M1601 1025H1619" stroke="#dcdcdc" stroke-width="1.700"/>
<path d="M1634 1017H1638V1033H1634ZM1638 1020H1642M1638 1024H1642M1638 1028H1642" stroke="#dcdcdc" fill="#dcdcdc" stroke-width="1"/>
<text x="1654" y="1029" style="font-size:12px;fill:#dce0e5">Decimal</text>
<use href="#c" x="1714" y="1025"/>
<rect x="1729" y="1016" width="13" height="18" rx="1.500" fill="none" stroke="#dcdcdc" stroke-width="1.300"/><path d="M1732 1020H1739M1732 1024H1739M1732 1028H1739" stroke="#dcdcdc" stroke-dasharray="1.500 1"/>
<rect x="1755" y="1017" width="14" height="15" fill="none" stroke="#dcdcdc" stroke-width="1.200"/><rect x="1755" y="1017" width="14" height="3" fill="#dcdcdc"/><rect x="1762" y="1026" width="7" height="5" fill="#e4e4e4"/>
<use href="#c" x="1781" y="1025"/>
<rect x="1799" y="1016" width="6" height="6" fill="none" stroke="#dcdcdc"/><circle cx="1810" cy="1020" r="3.500" fill="none" stroke="#dcdcdc"/><path d="M1804 1032L1808 1025L1812 1032Z" fill="none" stroke="#dcdcdc"/>
<circle cx="1830.500" cy="1025" r="9" fill="none" stroke="#fff" stroke-width="1.400"/><path d="M1824 1031L1837 1018" stroke="#fff" stroke-width="1.400"/>
<rect x="1846" y="1016" width="14" height="18" fill="#3a4a6a"/><path d="M1849 1019H1858V1029H1849Z" fill="#5d95cf"/><path d="M1851 1030L1854 1033L1860 1026" stroke="#6cc070" stroke-width="1.600" fill="none"/><circle cx="1854" cy="1017" r="2" fill="#f0d060"/>
<rect x="1874" y="1018" width="14" height="14" fill="none" stroke="#dcdcdc" stroke-width="1.200"/><path d="M1877 1029L1885 1021M1885 1021H1881M1885 1021V1025" stroke="#dcdcdc" fill="none"/>
<path d="M1897 1018H1914M1897 1025H1914M1897 1032H1914" stroke="#dcdcdc" stroke-width="2"/>

<!-- taskbar -->
<rect y="1040" width="1920" height="34" fill="#1f2a37"/>
<rect x="48" y="1040" width="288" height="34" fill="#f2f2f2"/>
<rect x="632" y="1040" width="48" height="34" fill="#3a424d"/>
<text x="88" y="1066" style="font-size:15px;fill:#1f2a37">Type here to search</text>
<g transform="translate(0,3)">
<path d="M15 1049L23 1047.800V1055.500H15ZM24.500 1047.600L32 1046.500V1055.500H24.500ZM15 1057H23V1064.500L15 1063.400ZM24.500 1057H32V1066L24.500 1064.800Z" fill="#fff"/>
<circle cx="70" cy="1055" r="6" fill="none" stroke="#222" stroke-width="1.400"/><path d="M66 1060L61 1066" stroke="#222" stroke-width="1.500"/>
<path d="M290 1048Q292 1058 302 1060Q292 1062 290 1072Q288 1062 278 1060Q288 1058 290 1048Z" fill="#f6c35c" transform="translate(0,-3)"/>
<path d="M311 1056Q312 1063 318 1064Q312 1065 311 1071Q310 1065 304 1064Q310 1063 311 1056Z" fill="#f6c35c" transform="translate(0,-3)"/>
<path d="M268 1064Q269 1067 272 1068Q269 1069 268 1072Q267 1069 264 1068Q267 1067 268 1064Z" fill="#3f9ee0" transform="translate(0,-3)"/>
<rect x="302" y="1044" width="3" height="3" fill="#d94a3a"/><rect x="321" y="1064" width="3" height="3" fill="#6cc070"/>
<path d="M353 1050H368M353 1064H368" stroke="#eee" stroke-width="1.300"/><rect x="354" y="1053" width="8" height="8" fill="none" stroke="#eee" stroke-width="1.300"/><rect x="365" y="1053" width="4" height="8" fill="none" stroke="#eee" stroke-width="1.300"/>
<path d="M402 1050Q410 1044 420 1050L414 1068Q406 1071 403 1062Z" fill="#3d9ad6"/><path d="M408 1048L420 1050L418 1058L406 1058Z" fill="#f2a24a"/><path d="M402 1060L412 1058L414 1068L406 1068Z" fill="#d14f52"/><path d="M415 1054L421 1056L417 1066L412 1064Z" fill="#7cc47a"/>
<circle cx="461" cy="1057" r="14" fill="#1673c4"/><path d="M450 1052C453 1044 470 1042 473 1056C473 1062 465 1063 462 1060C468 1060 466 1052 459 1052C452 1053 450 1060 453 1066C449 1062 448 1056 450 1052Z" fill="#45c8a0"/><circle cx="463" cy="1060" r="6" fill="#1f2a37"/>
<path d="M497 1046H510L513 1050H519V1069H497Z" fill="#f6cc5c"/><rect x="497" y="1050" width="22" height="5" fill="#e6a93f"/><rect x="504" y="1061" width="8" height="8" fill="#1673c4"/>
<path d="M546 1051H570V1069H546Z" fill="#f0f0f0"/><path d="M552 1051V1048C552 1043 564 1043 564 1048V1051" fill="none" stroke="#2f9ad6" stroke-width="2"/><rect x="553" y="1055" width="4.500" height="4.500" fill="#d9503a"/><rect x="559" y="1055" width="4.500" height="4.500" fill="#7cb84a"/><rect x="553" y="1061" width="4.500" height="4.500" fill="#2f9ad6"/><rect x="559" y="1061" width="4.500" height="4.500" fill="#f0b84a"/>
<circle cx="607.500" cy="1057" r="12.500" fill="#d94a3a"/><path d="M607.500 1057L619 1051A12.500 12.500 0 0 1 607.500 1069.500Z" fill="#f0c24a"/><path d="M607.500 1057L607.500 1069.500A12.500 12.500 0 0 1 596 1051Z" fill="#4a9a55"/><circle cx="607.500" cy="1057" r="6" fill="#5a9ee0" stroke="#eee" stroke-width="2"/>
<rect x="644" y="1045" width="24" height="24" fill="#f4f0e8"/><path d="M647 1067L654.500 1047H658L665 1067H661L659.500 1062H653L651 1067ZM654 1058.500H658.500L656.300 1052Z" fill="#b8242a"/>
</g>
<path d="M1482 1070Q1480 1060 1488 1058Q1492 1055 1497 1058Q1508 1060 1508 1070Z" fill="#6ab6e8"/><path d="M1491 1059Q1486 1053 1494 1048Q1493 1053 1498 1055Q1498 1058 1496 1059Z" fill="#f0913a"/>
<text x="1514" y="1065" style="font-size:14px;fill:#eee">16°C</text>
<text x="1553" y="1065" direction="ltr" style="font-size:13px;fill:#dcdcdc">غائم غالبًا</text>
<g transform="translate(0,2)">
<path d="M1630 1058L1635 1052L1641 1058" fill="none" stroke="#eee" stroke-width="1.300"/>
<circle cx="1658" cy="1058" r="7" fill="#d0d0d0"/><circle cx="1661" cy="1063" r="4.500" fill="#b83232"/>
<rect x="1677" y="1052" width="12" height="10" fill="none" stroke="#eee" stroke-width="1.300"/><rect x="1679" y="1050" width="3" height="4" fill="#eee"/><rect x="1685" y="1054" width="4" height="6" fill="#eee"/>
<rect x="1702" y="1052" width="10" height="11" rx="2" fill="none" stroke="#eee" stroke-width="1.300"/><path d="M1704 1049H1710M1704 1066H1710" stroke="#eee" stroke-width="1.300"/>
<path d="M1723 1053H1727L1732 1049V1066L1727 1062H1723Z" fill="none" stroke="#eee" stroke-width="1.200"/><path d="M1735 1053Q1738 1057.500 1735 1062M1738 1050Q1742 1057.500 1738 1065" fill="none" stroke="#eee"/>
<path d="M1751 1066Q1751 1058 1758 1053M1754 1066Q1754 1061 1759 1057M1757 1066Q1757 1063 1760 1061" fill="none" stroke="#eee" stroke-width="1.300"/>
<text x="1785" y="1064" text-anchor="middle" style="font-size:13px;fill:#eee">ع</text>
</g>
<text x="1836" y="1055" text-anchor="middle" style="fill:#eee">10:50 PM</text>
<text x="1836" y="1071" text-anchor="middle" style="fill:#eee">4/20/2026</text>
<path d="M1880 1049H1895V1063L1890 1066H1880Z" fill="none" stroke="#eee" stroke-width="1.300"/><circle cx="1892" cy="1066" r="2.500" fill="#eee"/>

<!-- watermark -->
<text x="962" y="1042" text-anchor="middle" direction="rtl" style="font-size:58px;font-weight:bold;fill:#b4b8bc;opacity:.5">خمســات</text>
</svg>
</body></html>
